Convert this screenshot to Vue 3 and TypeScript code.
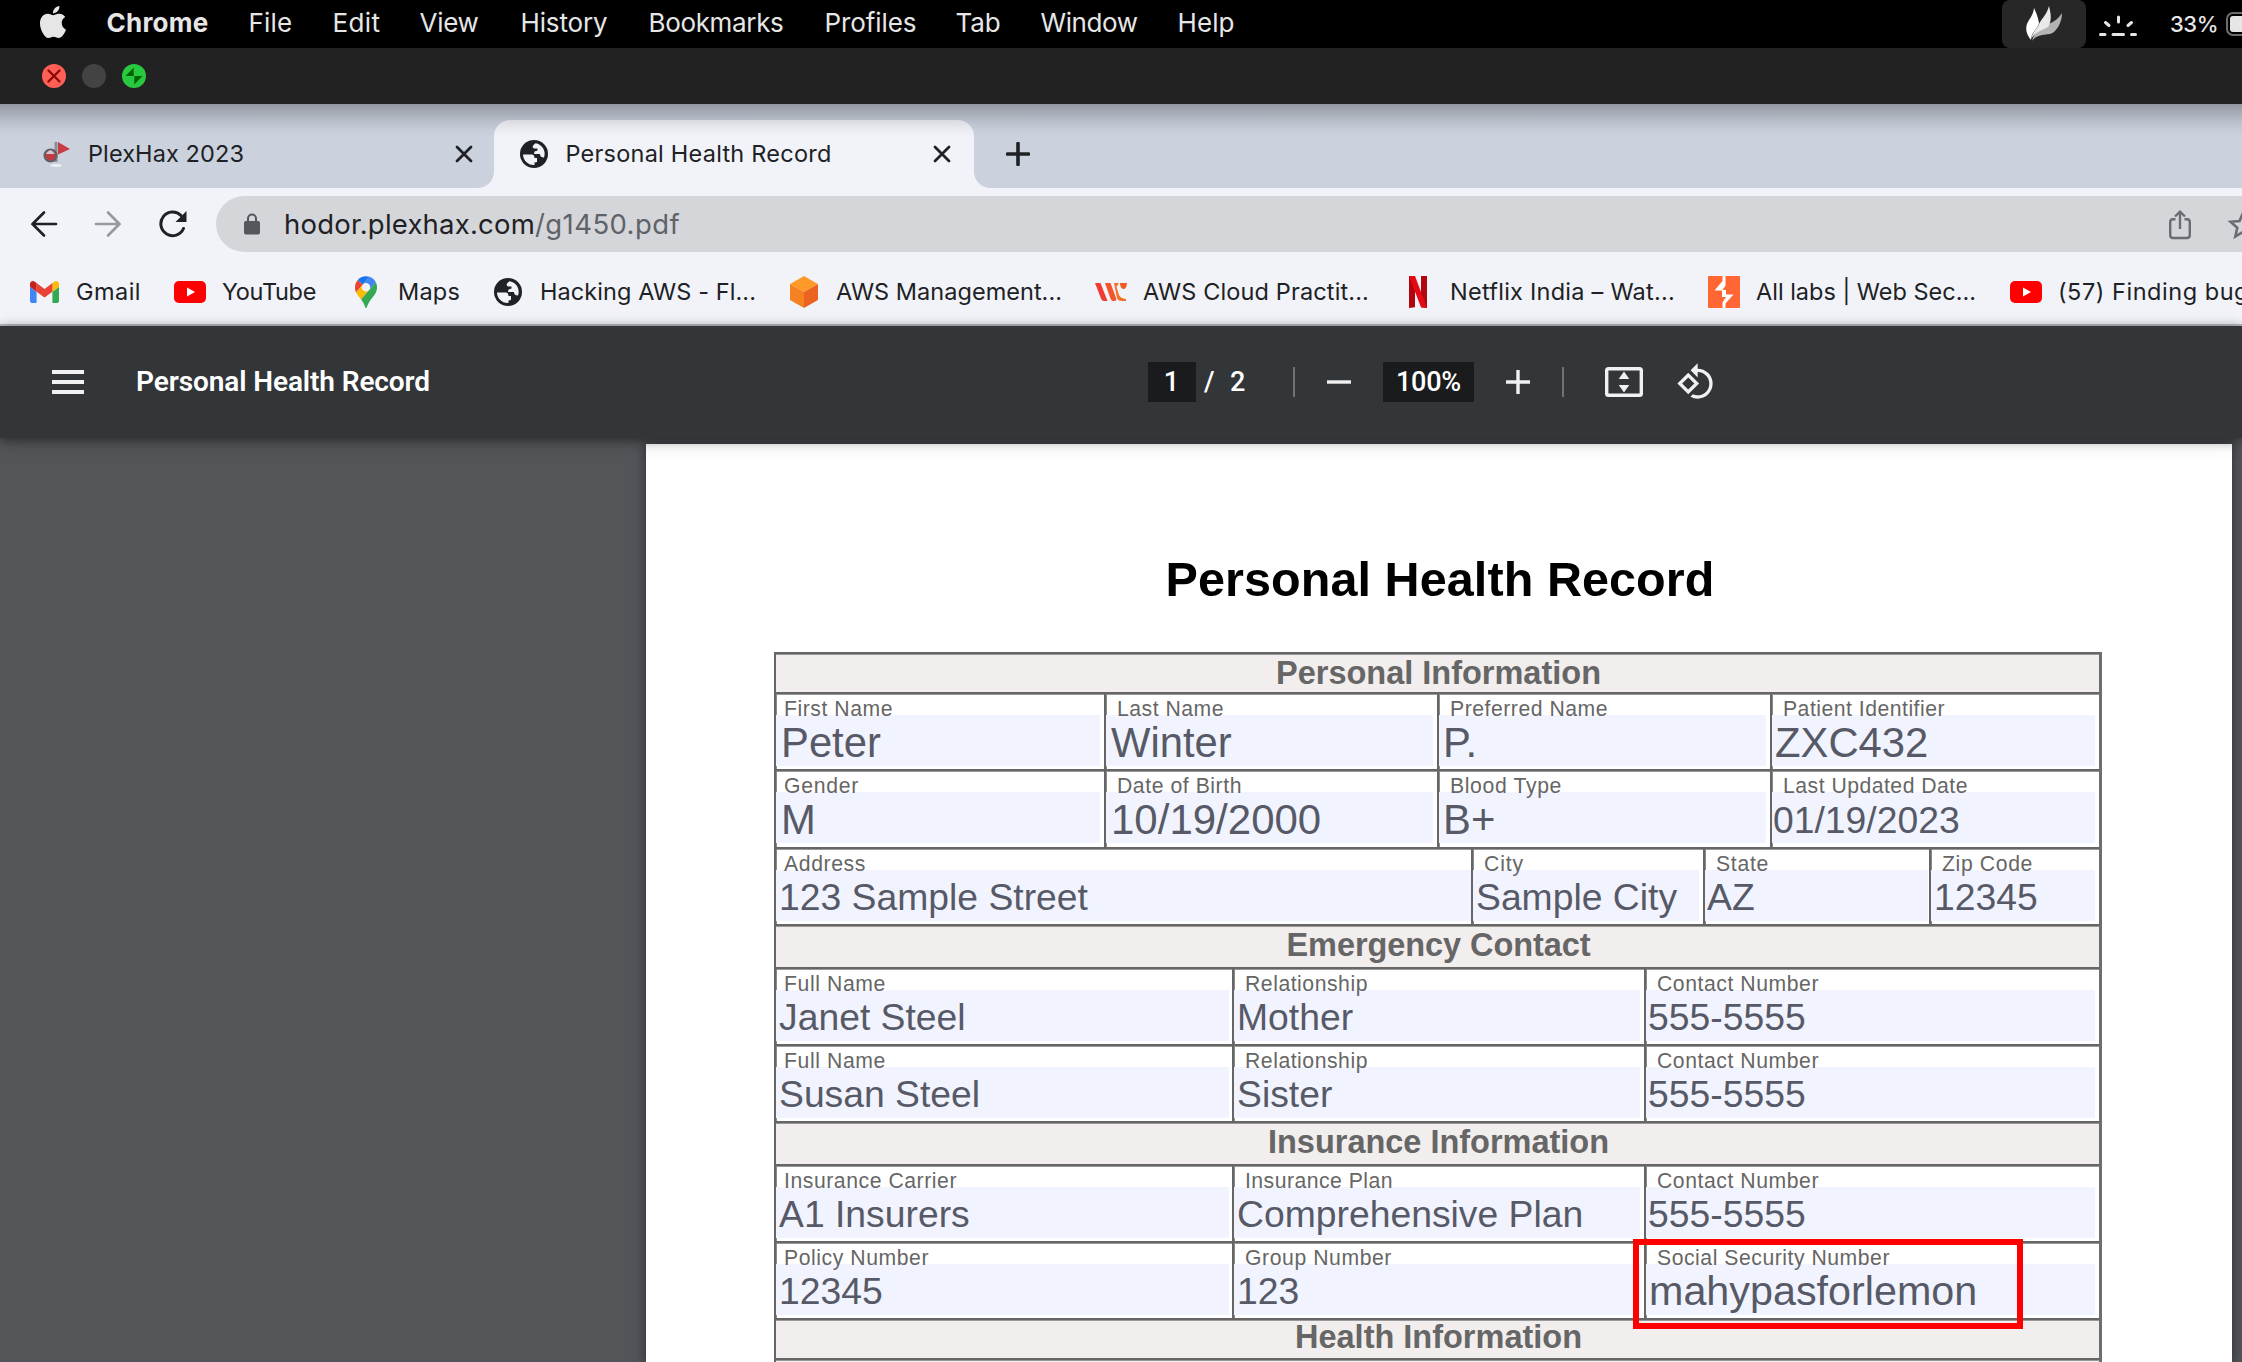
<script setup lang="ts">
import type { Directive } from 'vue'

/** Spreads letter spacing so that a label occupies the given width in pixels. */
const vFit: Directive<HTMLElement, number | undefined> = {
  mounted(el, binding) {
    if (!binding.value) return
    const natural = el.getBoundingClientRect().width
    const count = (el.textContent ?? '').length
    el.style.letterSpacing = `${(binding.value - natural) / count}px`
  },
}

interface MenuItem { label: string; step: number; fit: number; bold?: boolean }
const menus: MenuItem[] = [
  { label: 'Chrome', step: 142, fit: 102, bold: true },
  { label: 'File', step: 84, fit: 44 },
  { label: 'Edit', step: 87, fit: 48 },
  { label: 'View', step: 101, fit: 59 },
  { label: 'History', step: 128, fit: 87 },
  { label: 'Bookmarks', step: 176, fit: 135 },
  { label: 'Profiles', step: 131, fit: 92 },
  { label: 'Tab', step: 85, fit: 45 },
  { label: 'Window', step: 137, fit: 97 },
  { label: 'Help', step: 90, fit: 57 },
]

interface Bookmark { icon: string; label: string; step: number; fit: number }
const bookmarks: Bookmark[] = [
  { icon: 'gmail', label: 'Gmail', step: 146, fit: 65 },
  { icon: 'youtube', label: 'YouTube', step: 176, fit: 94 },
  { icon: 'maps', label: 'Maps', step: 142, fit: 62 },
  { icon: 'globe', label: 'Hacking AWS - Fl...', step: 296, fit: 216 },
  { icon: 'cube', label: 'AWS Management...', step: 307, fit: 226 },
  { icon: 'whiz', label: 'AWS Cloud Practit...', step: 307, fit: 226 },
  { icon: 'netflix', label: 'Netflix India – Wat...', step: 306, fit: 225 },
  { icon: 'burp', label: 'All labs | Web Sec...', step: 302, fit: 220 },
  { icon: 'youtube', label: '(57) Finding bugs', step: 300, fit: 204 },
]

interface Field { label: string; value: string; width: number; fit: number; size: number; gap: number; pad: number }
interface Row { height: number; title?: string; fit?: number; fields?: Field[]; drop?: number; leading?: number }
const f = (label: string, value: string, width: number, fit: number, gap = 4, pad = 3, size = 37.3): Field =>
  ({ label, value, width, fit, gap, pad, size })

const rows: Row[] = [
  { height: 40, title: 'Personal Information', fit: 325, drop: -2 },
  { height: 77, leading: 56, fields: [
    f('First Name', 'Peter', 330, 109, 4, 5, 41.8),
    f('Last Name', 'Winter', 333, 107, 4, 5, 41.8),
    f('Preferred Name', 'P.', 333, 158, 4, 4, 41.8),
    f('Patient Identifier', 'ZXC432', 329, 162, 4, 3, 41.8),
  ] },
  { height: 78, leading: 56, fields: [
    f('Gender', 'M', 330, 75, 4, 5, 41.8),
    f('Date of Birth', '10/19/2000', 333, 125, 4, 5, 42),
    f('Blood Type', 'B+', 333, 112, 4, 4, 41.8),
    f('Last Updated Date', '01/19/2023', 329, 185, 4, 1),
  ] },
  { height: 77, leading: 54, fields: [
    f('Address', '123 Sample Street', 697, 82, 0, 3),
    f('City', 'Sample City', 232, 40, 4, 3),
    f('State', 'AZ', 226, 53, 1, 2),
    f('Zip Code', '12345', 170, 91, 4, 3),
  ] },
  { height: 43, title: 'Emergency Contact', fit: 304, drop: -5 },
  { height: 77, leading: 54, fields: [
    f('Full Name', 'Janet Steel', 458, 102, 3, 3),
    f('Relationship', 'Mother', 412, 123, 4, 3),
    f('Contact Number', '555-5555', 455, 162, 4, 2),
  ] },
  { height: 77, leading: 54, fields: [
    f('Full Name', 'Susan Steel', 458, 102, 3, 3),
    f('Relationship', 'Sister', 412, 123, 4, 3),
    f('Contact Number', '555-5555', 455, 162, 4, 2),
  ] },
  { height: 43, title: 'Insurance Information', fit: 341, drop: -5 },
  { height: 77, leading: 54, fields: [
    f('Insurance Carrier', 'A1 Insurers', 458, 173, 3, 3),
    f('Insurance Plan', 'Comprehensive Plan', 412, 148, 4, 3),
    f('Contact Number', '555-5555', 455, 162, 4, 2),
  ] },
  { height: 77, leading: 54, fields: [
    f('Policy Number', '12345', 458, 145, 3, 3),
    f('Group Number', '123', 412, 147, 4, 3),
    f('Social Security Number', 'mahypasforlemon', 455, 233, 4, 3, 41.3),
  ] },
  { height: 40, title: 'Health Information', fit: 287, drop: -5 },
  { height: 40, title: '' },
]
</script>

<template>
  <div class="screen">
    <header class="menubar">
      <svg class="apple" viewBox="0 0 24 24"><path fill="#e6e6e6" d="M12.152 6.896c-.948 0-2.415-1.078-3.96-1.04-2.04.027-3.91 1.183-4.961 3.014-2.117 3.675-.546 9.103 1.519 12.09 1.013 1.454 2.208 3.09 3.792 3.039 1.52-.065 2.09-.987 3.935-.987 1.831 0 2.35.987 3.96.948 1.637-.026 2.676-1.48 3.676-2.948 1.156-1.688 1.636-3.325 1.662-3.415-.039-.013-3.182-1.221-3.22-4.857-.026-3.04 2.48-4.494 2.597-4.559-1.429-2.09-3.623-2.324-4.39-2.376-2-.156-3.675 1.09-4.61 1.09zM15.53 3.83c.843-1.012 1.4-2.427 1.245-3.83-1.207.052-2.662.805-3.532 1.818-.78.896-1.454 2.338-1.273 3.714 1.338.104 2.715-.688 3.559-1.701" /></svg>
      <nav class="menus">
        <div v-for="m in menus" :key="m.label" class="menu" :style="{ width: m.step + 'px' }">
          <span v-fit="m.fit" :class="{ bold: m.bold }">{{ m.label }}</span>
        </div>
      </nav>
      <div class="tray">
        <div class="tray-active">
          <svg width="36" height="36" viewBox="0 0 36 36">
            <path fill="#b3b3b3" d="M6 35C8 27 14 21 22 18C28 16 33 12 36 7C36 16 31 26 24 28C16 29 10 29 6 35Z" />
            <path fill="#e9e9e9" d="M5 33C7 25 12 22 13 18C16 12 20 10 23 0C25 8 26 15 22 21C17 24 9 26 5 33Z" />
            <path fill="#fff" d="M5 34C1 29-1 24 1 18C3 13 7 10 8 2C10 6 12 11 13 17C12 23 5 26 5 34Z" />
          </svg>
        </div>
        <svg class="kbd" width="38" height="22" viewBox="0 0 38 22" stroke="#e6e6e6" stroke-width="3" stroke-linecap="round" fill="none">
          <path d="M1.5 19.5H6M14 19.5H24.500M32.500 19.500H36.500M19.500 2V7M6.500 7.500L10 10.500M32.500 7.500L29 10.500" />
        </svg>
        <span v-fit="48" class="pct">33%</span>
        <div class="battery"><div class="charge"></div></div>
      </div>
    </header>

    <div class="titlebar">
      <svg width="24" height="24" viewBox="0 0 24 24"><circle cx="12" cy="12" r="12" fill="#ff5f57" /><path d="M6.500 6.500L17.500 17.500M17.500 6.500L6.500 17.500" stroke="#8c0b05" stroke-width="2.400" stroke-linecap="round" /></svg>
      <svg width="24" height="24" viewBox="0 0 24 24"><circle cx="12" cy="12" r="12" fill="#434343" /></svg>
      <svg width="24" height="24" viewBox="0 0 24 24"><circle cx="12" cy="12" r="12" fill="#28c840" /><path d="M11.700 3.500V12H3.500ZM12.300 20.500V12H20.500Z" fill="#006500" /></svg>
    </div>

    <div class="tabstrip">
      <div class="tab first">
        <svg class="fav" width="28" height="28" viewBox="0 0 28 28">
          <ellipse cx="14" cy="25.500" rx="6" ry="1.500" fill="#eef0f3" />
          <path d="M12.500 2h3v20h-3z" fill="#8b8e96" />
          <circle cx="8.500" cy="15.500" r="6" fill="#c03a44" stroke="#625f67" stroke-width="2.200" />
          <path d="M4 14Q8.500 6.500 12.500 14Z" fill="#cfc6cd" />
          <path d="M16 2L28 9L16 14.500Z" fill="#c93a44" />
        </svg>
        <span v-fit="156" class="tab-title">PlexHax 2023</span>
        <svg class="close" width="18" height="18" viewBox="0 0 18 18"><path d="M2 2L16 16M16 2L2 16" /></svg>
      </div>
      <div class="tab active">
        <svg class="fav globe" width="28" height="28" viewBox="0 0 28 28"><circle cx="14" cy="14" r="14" fill="#202124" /><path d="M3 14.500L12 14.500C13.500 14.500 14.500 16 14.500 18H17V22L14.500 22.500V25C8 25.500 3 20 3 14.500ZM15.500 3.200C12 6 12 7 14 8.500H17.500V10.500L14.500 11.500L14 14H20C20 16 21 17.500 24 17.500C26.500 11 22 4 15.500 3.200Z" fill="#f1f3f8" /></svg>
        <span v-fit="266" class="tab-title">Personal Health Record</span>
        <svg class="close" width="18" height="18" viewBox="0 0 18 18"><path d="M2 2L16 16M16 2L2 16" /></svg>
      </div>
      <svg class="newtab" width="24" height="24" viewBox="0 0 24 24"><path d="M12 1.500V22.500M1.500 12H22.500" /></svg>
    </div>

    <div class="navbar">
      <svg class="back" width="28" height="28" viewBox="0 0 28 28"><path d="M26 14H2.500M14 2.500L2.500 14L14 25.500" /></svg>
      <svg class="forward" width="28" height="28" viewBox="0 0 28 28"><path d="M2 14H25.500M14 2.500L25.500 14L14 25.500" /></svg>
      <svg class="reload" width="28" height="28" viewBox="0 0 28 28"><path d="M24.500 18.500A11.800 11.800 0 1 1 22 5.500" fill="none" stroke="#202124" stroke-width="3" stroke-linecap="round" /><path d="M27.500 1V12H16.500Z" fill="#202124" /></svg>
      <div class="omnibox">
        <svg class="lock" width="16" height="22" viewBox="0 0 16 22"><rect y="8" width="16" height="13.500" rx="2" fill="#54575c" /><path d="M4 9V5.500a4 4 0 0 1 8 0V9" fill="none" stroke="#54575c" stroke-width="2" /></svg>
        <span class="url"><span v-fit="251">hodor.plexhax.com</span><span v-fit="145" class="path">/g1450.pdf</span></span>
        <svg class="share" width="22" height="30" viewBox="0 0 22 30" fill="none" stroke="#696c71" stroke-width="2.400"><path d="M6.500 9.200H4Q1.200 9.200 1.200 12V25Q1.200 28 4 28H18Q20.800 28 20.800 25V12Q20.800 9.200 18 9.200H15.500M11 19V2M6 6.500L11 1.700L16 6.500" /></svg>
        <svg class="star" width="30" height="30" viewBox="0 0 30 30" fill="none" stroke="#696c71" stroke-width="2.600"><path d="M15 3L18.500 11L27.500 11.800L20.700 17.700L22.700 26.500L15 21.800L7.300 26.500L9.300 17.700L2.500 11.800L11.500 11Z" /></svg>
      </div>
    </div>

    <div class="bookmarks">
      <div v-for="b in bookmarks" :key="b.label" class="bookmark" :style="{ width: b.step + 'px' }">
        <div class="bicon">
          <svg v-if="b.icon === 'gmail'" width="29" height="22" viewBox="52 42 88 66"><path fill="#4285f4" d="M58 108h14V74L52 59v43c0 3.320 2.690 6 6 6" /><path fill="#34a853" d="M120 108h14c3.320 0 6-2.690 6-6V59l-20 15" /><path fill="#fbbc04" d="M120 48v26l20-15v-8c0-7.420-8.470-11.650-14.400-7.200" /><path fill="#ea4335" d="M72 74V48l24 18 24-18v26L96 92" /><path fill="#c5221f" d="M52 51v8l20 15V48l-5.600-4.200c-5.940-4.450-14.400-.22-14.400 7.200" /></svg>
          <svg v-else-if="b.icon === 'youtube'" width="32" height="22" viewBox="0 0 32 22"><rect width="32" height="22" rx="5" fill="#f00" /><path fill="#fff" d="M13 6.500V15.500L21 11Z" /></svg>
          <svg v-else-if="b.icon === 'maps'" width="22" height="32" viewBox="0 0 92.300 132.300"><path fill="#1a73e8" d="M60.200 2.200C55.800.8 51 0 46.100 0 32 0 19.300 6.400 10.800 16.500l21.800 18.300L60.200 2.200z" /><path fill="#ea4335" d="M10.800 16.500C4.100 24.500 0 34.900 0 46.100c0 8.700 1.700 15.700 4.600 22l28-33.300-21.800-18.300z" /><path fill="#4285f4" d="M46.200 28.500c9.800 0 17.700 7.900 17.700 17.700 0 4.300-1.600 8.300-4.200 11.400 0 0 13.900-16.600 27.500-32.700-5.600-10.800-15.300-19-27-22.700L32.600 34.800c3.300-3.800 8.100-6.300 13.600-6.300" /><path fill="#fbbc04" d="M46.200 63.800c-9.800 0-17.700-7.900-17.700-17.700 0-4.300 1.500-8.300 4.100-11.300l-28 33.300c4.800 10.600 12.800 19.200 21 29.900l34.100-40.500c-3.300 3.900-8.100 6.300-13.500 6.300" /><path fill="#34a853" d="M59.100 109.200c15.400-24.100 33.300-35 33.300-63 0-7.700-1.900-14.900-5.200-21.300L25.600 98c2.600 3.400 5.300 7.300 7.900 11.300 9.400 14.500 6.800 23.100 12.800 23.100s3.400-8.700 12.800-23.200" /></svg>
          <svg v-else-if="b.icon === 'globe'" width="28" height="28" viewBox="0 0 28 28"><circle cx="14" cy="14" r="14" fill="#202124" /><path d="M3 14.500L12 14.500C13.500 14.500 14.500 16 14.500 18H17V22L14.500 22.500V25C8 25.500 3 20 3 14.500ZM15.500 3.200C12 6 12 7 14 8.500H17.500V10.500L14.500 11.500L14 14H20C20 16 21 17.500 24 17.500C26.500 11 22 4 15.500 3.200Z" fill="#f1f3f8" /></svg>
          <svg v-else-if="b.icon === 'cube'" width="28" height="32" viewBox="0 0 28 32"><path fill="#ff9a29" d="M14 0L28 8L14 16L0 8Z" /><path fill="#f58220" d="M0 8L14 16V32L0 24Z" /><path fill="#eb6320" d="M28 8L14 16V32L28 24Z" /></svg>
          <svg v-else-if="b.icon === 'whiz'" width="32" height="18" viewBox="0 0 32 18"><path fill="#ee3b33" d="M0 0H5.500L12.500 18H9Q7 18 6 15.500Z" /><path fill="#f2552c" d="M10 0H15.500L21 15Q22 18 19.500 18H18Q16.500 18 15.500 15.500Z" /><path fill="#f7702a" d="M19 0H24L21.500 4L24 12Q25.500 15.500 31 16V18H27Q23 18 22 15Z" /><path fill="#ef5a24" d="M25 0H32Q31.500 6 28.500 6Q25 5.500 25 0Z" /></svg>
          <svg v-else-if="b.icon === 'netflix'" width="18" height="32" viewBox="0 0 18 32"><path fill="#b1060f" d="M0 0H6V31.300L0 32ZM12 0H18V32L12 31.300Z" /><path fill="#e50914" d="M0 0H6L18 32L12 31.300Z" /></svg>
          <svg v-else width="32" height="32" viewBox="0 0 32 32"><rect width="32" height="32" rx="1" fill="#f63" /><path fill="#fff" d="M14.500 0H17.500V9.500L14.500 14H18V18.500H25.500L17.500 27.500V32H14.500V26.500L18 21H14V14.500H6.500L14.500 5Z" /></svg>
        </div>
        <span v-fit="b.fit" class="blabel">{{ b.label }}</span>
      </div>
    </div>

    <div class="pdfbar">
      <svg class="burger" width="32" height="24" viewBox="0 0 32 24"><path d="M0 0H32V4H0ZM0 10H32V14H0ZM0 20H32V24H0Z" fill="#f1f1f1" /></svg>
      <span v-fit="294" class="doc-title">Personal Health Record</span>
      <div class="controls">
        <span class="box page-no">1</span>
        <span class="slash">/</span>
        <span class="total">2</span>
        <i class="sep"></i>
        <svg class="minus" width="24" height="24" viewBox="0 0 24 24"><path d="M0 10.300H24V13.700H0Z" fill="#f1f1f1" /></svg>
        <span class="box zoom"><span v-fit="65">100%</span></span>
        <svg class="plus" width="24" height="24" viewBox="0 0 24 24"><path d="M0 10.300H10.300V0H13.700V10.300H24V13.700H13.700V24H10.300V13.700H0Z" fill="#f1f1f1" /></svg>
        <i class="sep second"></i>
        <svg class="fitpage" width="38" height="30" viewBox="0 0 38 30"><rect x="1.700" y="1.700" width="34.600" height="26.600" rx="1.800" fill="none" stroke="#f1f1f1" stroke-width="3.400" /><path d="M19 4.500L24.300 12H13.700ZM19 25.500L24.300 18H13.700Z" fill="#f1f1f1" /></svg>
        <svg class="rotate" width="40" height="40" viewBox="0 0 24 24"><path fill="#f1f1f1" d="M7.340 6.410L.86 12.900l6.490 6.480 6.490-6.480-6.500-6.490zM3.690 12.900l3.660-3.660L11 12.900l-3.660 3.660-3.650-3.660zm15.670-6.260C17.610 4.880 15.300 4 13 4V.76L8.760 5 13 9.240V6c1.790 0 3.580.68 4.950 2.050 2.730 2.730 2.730 7.170 0 9.900C16.580 19.320 14.790 20 13 20c-.97 0-1.940-.21-2.840-.61l-1.490 1.490C10.020 21.620 11.510 22 13 22c2.300 0 4.610-.88 6.360-2.640 3.520-3.510 3.520-9.210 0-12.720z" /></svg>
      </div>
    </div>

    <main class="viewer">
      <article class="page">
        <h1><span v-fit="549">Personal Health Record</span></h1>
        <div class="form">
          <div v-for="(row, i) in rows" :key="i" class="row" :class="{ heading: !row.fields }" :style="{ height: row.height + 'px' }">
            <template v-if="row.fields">
              <div v-for="c in row.fields" :key="c.label" class="cell" :style="{ width: c.width + 'px' }">
                <div class="label"><span v-fit="c.fit">{{ c.label }}</span></div>
                <div class="value" :style="{ marginRight: c.gap + 'px', paddingLeft: c.pad + 'px', fontSize: c.size + 'px', lineHeight: row.leading + 'px' }">{{ c.value }}</div>
              </div>
            </template>
            <h2 v-else :style="{ lineHeight: row.height + (row.drop ?? 0) + 'px' }"><span v-fit="row.fit">{{ row.title }}</span></h2>
          </div>
          <div class="marker"></div>
        </div>
      </article>
    </main>
  </div>
</template>

<style>
html, body { margin: 0; overflow: hidden; background: #525659; }
</style>

<style scoped>
.screen { width: 2242px; height: 1362px; overflow: hidden; display: flex; flex-direction: column; font-family: Inter, "Liberation Sans", sans-serif; color: #202124; white-space: nowrap; }
.screen > * { flex: none; box-sizing: border-box; }
svg { display: block; flex: none; }

.menubar { height: 48px; background: #000; display: flex; align-items: flex-start; color: #e6e6e6; font-size: 26px; line-height: 45px; }
.apple { width: 32px; height: 32px; margin: 6px 0 0 37px; }
.menus { display: flex; margin-left: 37.500px; }
.menu { flex: none; }
.menu span { display: inline-block; }
.bold { font-weight: 700; }
.tray { display: flex; margin-left: auto; width: 240px; flex: none; }
.tray-active { width: 84px; height: 48px; border-radius: 8px; background: #272727; display: flex; flex: none; box-sizing: border-box; padding: 6px 0 0 24px; }
.kbd { margin: 15px 0 0 13px; }
.pct { display: inline-block; font-size: 22px; font-weight: 500; line-height: 48px; margin-left: 33px; }
.battery { flex: none; width: 50px; height: 24px; margin: 12px 0 0 8px; border: 2px solid #6d6d6d; border-radius: 7px; box-sizing: border-box; padding: 2px; }
.charge { height: 16px; width: 15px; border-radius: 3px; background: #e6e6e6; }

.titlebar { height: 56px; background: #222; display: flex; gap: 16px; padding: 16px 0 0 42px; }

.tabstrip { height: 84px; background: #cbd2de; display: flex; position: relative; }
.tabstrip::after { content: ""; position: absolute; left: 0; right: 0; top: 0; height: 34px; background: linear-gradient(rgba(0,0,0,.29), rgba(0,0,0,.2) 20%, rgba(0,0,0,.08) 55%, rgba(0,0,0,.02) 80%, transparent); }
.tab { display: flex; align-items: center; height: 68px; margin-top: 16px; box-sizing: border-box; flex: none; }
.tab-title { display: inline-block; font-size: 23.500px; line-height: 66px; }
.first { width: 494px; padding-left: 42px; position: relative; }
.first .tab-title { margin-left: 18px; }
.close { margin-left: auto; }
.close path { stroke: #202124; stroke-width: 2.800; stroke-linecap: round; }
.first .close { margin-right: 21px; }
.active { width: 480px; background: #f1f3f8; border-radius: 16px 16px 0 0; padding-left: 26px; position: relative; }
.active::before, .active::after { content: ""; position: absolute; bottom: 0; width: 16px; height: 16px; }
.active::before { left: -16px; background: radial-gradient(circle at 0 0, transparent 15.500px, #f1f3f8 16.200px); }
.active::after { right: -16px; background: radial-gradient(circle at 100% 0, transparent 15.500px, #f1f3f8 16.200px); }
.active .tab-title { margin-left: 17.500px; }
.active .close { margin-right: 23px; }
.newtab { margin: 38px 0 0 32px; }
.newtab path { stroke: #202124; stroke-width: 3.600; stroke-linecap: round; }

.navbar { height: 72px; background: #f1f3f8; display: flex; align-items: flex-start; padding-top: 8px; }
.navbar > svg { margin-top: 13.500px; fill: none; }
.back { margin-left: 30px; stroke: #202124; stroke-width: 2.700; stroke-linecap: round; }
.forward { margin-left: 36px; stroke: #98999d; stroke-width: 2.700; stroke-linecap: round; }
.reload { margin-left: 37px; }
.omnibox { margin-left: 29px; width: 2060px; height: 56px; border-radius: 28px; background: #d5d6da; display: flex; flex: none; align-items: flex-start; }
.lock { margin: 17px 0 0 28px; }
.url { margin-left: 24px; font-size: 27.500px; line-height: 56px; width: 1883px; }
.url span { display: inline-block; }
.path { color: #5f6368; }
.share { margin-top: 14px; margin-left: 2px; }
.star { margin: 14px 0 0 37px; }

.bookmarks { height: 66px; background: #f1f3f8; border-bottom: 2px solid #bcbfc2; display: flex; padding-left: 28px; }
.bookmark { display: flex; align-items: center; flex: none; height: 64px; }
.bicon { width: 32px; display: flex; justify-content: center; margin-right: 16px; }
.blabel { display: inline-block; font-size: 23.500px; line-height: 62px; height: 62px; }

.pdfbar { height: 112px; background: #323639; display: flex; align-items: flex-start; color: #fff; font-family: Roboto, sans-serif; font-size: 27px; position: relative; z-index: 2; box-shadow: 0 2px 10px rgba(0,0,0,.45), 0 4px 20px rgba(0,0,0,.12); }
.burger { margin: 44px 0 0 52px; }
.doc-title { display: inline-block; font-weight: 600; font-size: 28px; line-height: 40px; margin: 36px 0 0 52px; }
.controls { display: flex; align-items: center; height: 40px; line-height: 40px; margin: 36px 0 0 718px; font-weight: 500; }
.controls > * { flex: none; }
.box { background: #191b1c; text-align: center; height: 40px; line-height: 40px; }
.box span { display: inline-block; }
.page-no { width: 48px; box-sizing: border-box; padding-right: 1px; }
.slash { width: 34px; padding-left: 8px; box-sizing: border-box; }
.total { width: 63px; }
.sep { width: 2px; height: 30px; background: #707376; }
.minus { margin-left: 32px; }
.zoom { width: 91px; margin-left: 32px; }
.plus { margin-left: 32px; }
.second { margin-left: 32px; }
.fitpage { margin-left: 41px; }
.rotate { margin-left: 33px; }

.viewer { height: 924px; background: #525659; display: flex; position: relative; }
.page { width: 1586px; height: 918px; margin: 6px 0 0 646px; background: #fff; box-shadow: 0 0 10px 2px #38363c; font-family: "Liberation Sans", Arial, sans-serif; color: #666; }
h1 { margin: 0; padding-top: 105px; height: 103px; text-align: center; color: #000; font-size: 48.500px; line-height: 60px; font-weight: 700; width: 1588px; }
h1 span { display: inline-block; }
.form { width: 1325px; margin-left: 128px; border-right: 3px solid #6e6e6e; position: relative; color: #666; }
.row { display: flex; box-sizing: border-box; border-top: 2px solid #666; box-shadow: inset 0 1px #9a9999; }
.heading { background: #f1eeed; border-left: 2px solid #666; }
h2 { margin: 0; flex: 1; text-align: center; font-size: 32.500px; font-weight: 700; padding-left: 2px; }
h2 span { display: inline-block; }
.cell { flex: none; box-sizing: border-box; border-left: 2px solid #666; box-shadow: inset 1px 0 #8a8a8a; }
.label { position: relative; z-index: 1; font-size: 21.200px; line-height: 29px; height: 21px; padding-left: 11px; }
.cell:first-child .label { padding-left: 8px; }
.label span { display: inline-block; }
.value { height: 51px; background: #f1f4ff; color: #575a66; }
.marker { position: absolute; left: 859px; top: 587px; width: 390px; height: 90px; box-sizing: border-box; border: 6px solid #f00; z-index: 3; }
</style>
